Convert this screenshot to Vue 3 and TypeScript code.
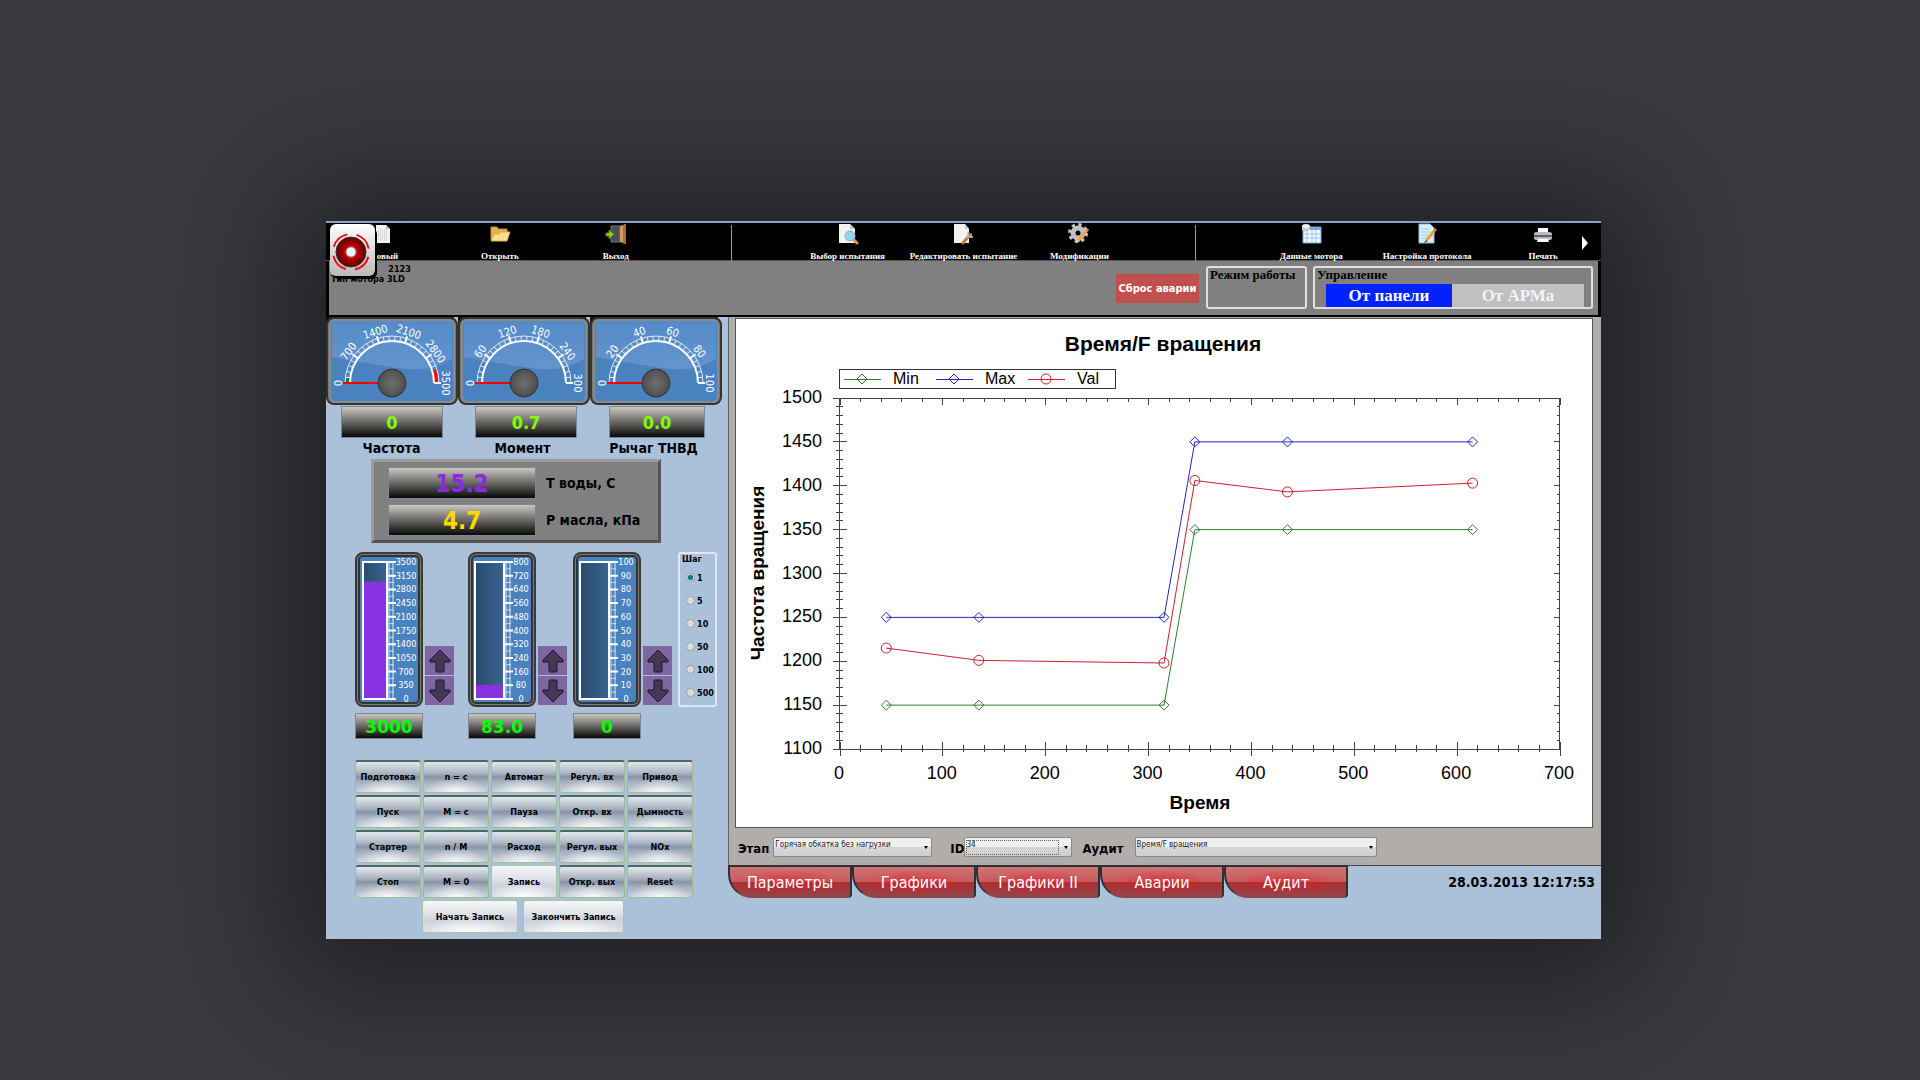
<script setup lang="ts">
import { ref } from 'vue'

interface ToolItem { id: string; label?: string }
interface Dial { caption: string; value: string; step: number; zones: boolean; wide: number }
interface Channel { max: number; divisions: number; value: number; text: string; barX: number; barW: number; labelX: number; name: string }
interface Point { x: number; y: number }
interface Series { name: string; color: string; round: boolean; points: Point[]; legendX: number }

const tools: ToolItem[] = [
  { id: 'new', label: 'Новый' },
  { id: 'open', label: 'Открыть' },
  { id: 'exit', label: 'Выход' },
  { id: 'sep1' },
  { id: 'find', label: 'Выбор испытания' },
  { id: 'edit', label: 'Редактировать испытание' },
  { id: 'mods', label: 'Модификации' },
  { id: 'sep2' },
  { id: 'data', label: 'Данные мотора' },
  { id: 'protocol', label: 'Настройка протокола' },
  { id: 'print', label: 'Печать' },
]

const dials: Dial[] = [
  { caption: 'Частота', value: '0', step: 700, zones: true, wide: 102 },
  { caption: 'Момент', value: '0.7', step: 60, zones: false, wide: 102 },
  { caption: 'Рычаг ТНВД', value: '0.0', step: 20, zones: false, wide: 96 },
]

const C = 66
function polar(r: number, deg: number): Point {
  const a = (deg * Math.PI) / 180
  return { x: C - r * Math.cos(a), y: C - r * Math.sin(a) }
}
function arc(r: number, from: number, to: number): string {
  const a = polar(r, from)
  const b = polar(r, to)
  return `M${a.x} ${a.y}A${r} ${r} 0 0 1 ${b.x} ${b.y}`
}
function radial(r1: number, r2: number, deg: number): string {
  const a = polar(r1, deg)
  const b = polar(r2, deg)
  return `M${a.x} ${a.y}L${b.x} ${b.y}`
}
const majors = [0, 1, 2, 3, 4, 5].map((i) => i * 36)
const majorPath = majors.map((d) => radial(42, 49, d)).join('')
const minorPath = Array.from({ length: 26 }, (_, i) => radial(42, 47, i * 7.2)).join('')

const channels: Channel[] = [
  { name: 'Частота', max: 3500, divisions: 10, value: 3000, text: '3000', barX: 8, barW: 24, labelX: 51 },
  { name: 'Момент', max: 800, divisions: 10, value: 83, text: '83.0', barX: 7, barW: 29, labelX: 53 },
  { name: 'Рычаг ТНВД', max: 100, divisions: 10, value: 0, text: '0', barX: 7, barW: 29, labelX: 53 },
]
const meterY = (part: number) => 147 - part * 137
function meterMinor(c: Channel): string {
  const x = c.barX + c.barW + 2
  return Array.from({ length: 20 }, (_, i) => `M${x} ${meterY(i / 20)}h5`).join('')
}
function meterMajor(c: Channel): string {
  const x = c.barX + c.barW
  return Array.from({ length: 11 }, (_, i) => `M${x} ${meterY(i / 10)}h9`).join('')
}

const steps = [1, 5, 10, 50, 100, 500]
const step = ref(1)

const commands = [
  'Подготовка', 'n = c', 'Автомат', 'Регул. вх', 'Привод',
  'Пуск', 'M = c', 'Пауза', 'Откр. вх', 'Дымность',
  'Стартер', 'n / M', 'Расход', 'Регул. вых', 'NOx',
  'Стоп', 'M = 0', 'Запись', 'Откр. вых', 'Reset',
]
const tabs = ['Параметры', 'Графики', 'Графики II', 'Аварии', 'Аудит']

const px = (v: number) => 104 + (v * 720) / 700
const py = (v: number) => 430 - ((v - 1100) * 351) / 400
const times = [45, 135, 315, 345, 435, 615]
const line = (ys: number[]): Point[] => ys.map((y, i) => ({ x: px(times[i]), y: py(y) }))
const series: Series[] = [
  { name: 'Min', color: '#2e7d32', round: false, legendX: 126, points: line([1150, 1150, 1150, 1350, 1350, 1350]) },
  { name: 'Max', color: '#2626c4', round: false, legendX: 218, points: line([1250, 1250, 1250, 1450, 1450, 1450]) },
  { name: 'Val', color: '#cc1f2f', round: true, legendX: 310, points: line([1215, 1201, 1198, 1406, 1393, 1403]) },
]
const poly = (p: Point[]) => p.map((q) => `${q.x},${q.y}`).join(' ')
const diamond = (x: number, y: number) => `M${x - 5} ${y}L${x} ${y - 5}L${x + 5} ${y}L${x} ${y + 5}Z`
const yTicks = Array.from({ length: 9 }, (_, i) => 1100 + i * 50)
const xTicks = Array.from({ length: 8 }, (_, i) => i * 100)
const snap = (v: number) => Math.round(v) + 0.5
const tickPath = [
  ...Array.from({ length: 41 }, (_, i) => {
    const y = snap(py(1100 + i * 10) - 0.5)
    const big = i % 5 === 0
    return `M${big ? 97 : 100} ${y}h${big ? 14 : 7}M824 ${y}h${big ? -6 : -3}`
  }),
  ...Array.from({ length: 36 }, (_, i) => {
    const x = snap(px(i * 20) - 0.5)
    const big = i % 5 === 0
    return `M${x} ${big ? 423 : 426}v${big ? 14 : 7}M${x} 79v${big ? 7 : 4}`
  }),
].join('')
</script>

<template>
  <div class="desktop">
    <main class="window">
      <nav class="toolbar">
        <template v-for="t in tools" :key="t.id">
          <span v-if="!t.label" class="separator"></span>
          <button v-else type="button" class="tool">
            <svg width="22" height="22" viewBox="0 0 22 22" aria-hidden="true">
              <template v-if="t.id === 'new'">
                <path d="M3 2h10l4 4v14H3z" fill="#f4f4f4" />
                <path d="M5 7h9M5 9h9M5 11h9M5 13h9M5 15h9M5 17h9" stroke="#bbb" stroke-dasharray="1 1" />
                <path d="M13 2v4h4z" fill="#bbb" />
              </template>
              <template v-else-if="t.id === 'open'">
                <path d="M2 17V4h6l1 2h9v3" fill="#e2b552" stroke="#c4923a" />
                <path d="M2 18L5 11h5l1-2h10l-3 9z" fill="#fbdf8e" stroke="#d9a94a" />
              </template>
              <template v-else-if="t.id === 'exit'">
                <path d="M6 3h9v16H6z" fill="#4b4f52" stroke="#777" />
                <path d="M15 3l6-2v20l-6-2z" fill="#d39a5c" />
                <path d="M18 2l3-1v20l-3-1z" fill="#a86f36" />
                <path d="M1 10h3V7l5 4-5 5v-3H1z" fill="#8fd01c" stroke="#4d8a0a" />
              </template>
              <template v-else-if="t.id === 'find'">
                <path d="M2 1h11l5 5v14H2z" fill="#f2f2f0" />
                <path d="M13 1v5h5z" fill="#c8c8c8" />
                <path d="M16 16l4 4" stroke="#e79a2c" stroke-width="3" stroke-linecap="round" />
                <circle cx="13" cy="13" r="5" fill="#8fd4ee" stroke="#9aa" />
              </template>
              <template v-else-if="t.id === 'edit'">
                <path d="M2 1h11l4 5v14H2z" fill="#f2f2f0" />
                <path d="M13 1v5h4z" fill="#c8c8c8" />
                <path d="M16 14l-5 6" stroke="#c9773a" stroke-width="3" stroke-linecap="round" />
                <path d="M15 15l3-3M17 9q-2 3 1 5l3 0M20 12l-2-1" stroke="#a9a9a9" stroke-width="2" fill="none" />
              </template>
              <template v-else-if="t.id === 'mods'">
                <circle cx="10" cy="10" r="8" fill="none" stroke="#c2c2c2" stroke-width="4" stroke-dasharray="3 3.3" />
                <circle cx="10" cy="10" r="5" fill="none" stroke="#c2c2c2" stroke-width="5" />
                <path d="M19 7L10 18" stroke="#f0a63a" stroke-width="3" />
                <path d="M20 6l-1 1" stroke="#d98a9a" stroke-width="3" />
                <path d="M10 17l-2 3 3-1z" fill="#f4d9a8" />
              </template>
              <template v-else-if="t.id === 'data'">
                <path d="M3 4h18v16H3z" fill="#f4f8fc" stroke="#6aa6d8" />
                <path d="M3 4h18v3H3z" fill="#6fb0e0" />
                <path d="M7 7v13M12 7v13M16 7v13M3 11h18M3 15h18" stroke="#9cc4e6" />
                <path d="M2 3v4q4 3 8 0V3z" fill="#c9c9c9" />
                <ellipse cx="6" cy="3" rx="4" ry="2" fill="#eee" />
              </template>
              <template v-else-if="t.id === 'protocol'">
                <path d="M3 1h11l4 4v15H3z" fill="#d8eef8" stroke="#8fc1dc" />
                <path d="M5 6h8M5 9h9M5 12h7M5 15h6" stroke="#9fcbe2" />
                <path d="M18 8L10 18" stroke="#eda23c" stroke-width="3" />
                <path d="M20 6l-2 2" stroke="#cc7f7f" stroke-width="3" />
                <path d="M10 17l-2 3 3-1z" fill="#444" />
              </template>
              <template v-else>
                <path d="M6 5h10v6H6z" fill="#fff" />
                <path d="M2 11q0-2 3-2h12q3 0 3 2v4q0 2-3 2H5q-3 0-3-2z" fill="#b9bcc0" />
                <path d="M2 12h18v2H2z" fill="#5d6064" />
                <path d="M6 16h10l1 3H5z" fill="#fff" />
              </template>
            </svg>
            <span>{{ t.label }}</span>
          </button>
        </template>
        <button type="button" class="more" aria-label="Далее">
          <svg width="8" height="14" viewBox="0 0 8 14"><path d="M1 0l6 7-6 7z" fill="#fff" /></svg>
        </button>
      </nav>

      <header class="status">
        <div class="motor">
          <p>№ мотора<span>2123</span></p>
          <p>Тип мотора 3LD</p>
        </div>
        <button type="button" class="reset">Сброс аварии</button>
        <fieldset class="box mode"><legend>Режим работы</legend></fieldset>
        <fieldset class="box control">
          <legend>Управление</legend>
          <div class="switch">
            <button type="button" class="active">От панели</button>
            <button type="button">От АРМа</button>
          </div>
        </fieldset>
        <svg class="siren" width="50" height="58" viewBox="0 0 50 58" aria-hidden="true">
          <defs>
            <linearGradient id="plate" x1="0" y1="0" x2="0" y2="1">
              <stop offset="0" stop-color="#fff" /><stop offset="1" stop-color="#b9b9b9" />
            </linearGradient>
            <radialGradient id="lamp"><stop offset="0.3" stop-color="#d40000" /><stop offset="1" stop-color="#5a0000" /></radialGradient>
          </defs>
          <rect x="3" y="4" width="44" height="51" rx="6" />
          <rect x="0" y="0" width="45" height="52" rx="6" fill="url(#plate)" />
          <circle cx="21" cy="28" r="15" fill="url(#lamp)" stroke="#333" />
          <circle cx="21" cy="28" r="5" fill="#f2f2f2" stroke="#999" />
          <circle cx="21" cy="28" r="18" fill="none" stroke="#f01010" stroke-width="2" stroke-dasharray="19 9.3" stroke-dashoffset="-5" />
        </svg>
      </header>

      <div class="body">
        <section class="left">
          <div class="dials">
            <svg v-for="d in dials" :key="d.caption" width="132" height="88" viewBox="0 0 132 88" role="img" :aria-label="d.caption">
              <defs>
                <linearGradient id="face" x1="0" y1="0" x2="0" y2="1">
                  <stop offset="0" stop-color="#5c91cd" /><stop offset="1" stop-color="#76a0d4" />
                </linearGradient>
                <radialGradient id="knob"><stop offset="0" stop-color="#707070" /><stop offset="1" stop-color="#4c4c4c" /></radialGradient>
              </defs>
              <path d="M0 0h128v12H0z" fill="#111" />
              <rect x="1" y="1" width="130" height="86" rx="7" fill="#777" stroke="#333" stroke-width="2" />
              <rect x="4" y="3" width="124" height="82" rx="5" fill="#4a82c0" stroke="#8a8a8a" stroke-width="2" />
              <path d="M6 4h120v38q-22 14-54 9T6 40z" fill="url(#face)" opacity="0.6" />
              <path :d="arc(47, 0, 180)" fill="none" stroke="#dbe8f6" />
              <path :d="minorPath" stroke="#dbe8f6" />
              <path v-if="d.zones" :d="arc(44, 163, 180)" fill="none" stroke="#f00" stroke-width="4" />
              <path v-if="d.zones" :d="arc(44, 0, 6)" fill="none" stroke="#187a30" stroke-width="4" />
              <path :d="arc(42, 0, 180)" fill="none" stroke="#fff" stroke-width="2" />
              <path :d="majorPath" stroke="#fff" stroke-width="2" />
              <text
                v-for="(m, i) in majors" :key="m" class="dial-text"
                :transform="`translate(${polar(54, m).x} ${polar(54, m).y}) rotate(${m - 90})`"
                y="4"
              >{{ i * d.step }}</text>
              <path d="M17 66h36" stroke="#f00" stroke-width="2" />
              <circle cx="66" cy="66" r="14" fill="url(#knob)" stroke="#333" />
            </svg>
          </div>
          <div class="dial-values">
            <output v-for="d in dials" :key="d.caption" class="readout lime" :style="{ width: d.wide + 'px' }">{{ d.value }}</output>
          </div>
          <div class="dial-names"><span v-for="d in dials" :key="d.caption">{{ d.caption }}</span></div>

          <div class="params">
            <output class="readout water">15.2</output><span>Т воды, С</span>
            <output class="readout oil">4.7</output><span>Р масла, кПа</span>
          </div>

          <div class="channels">
            <div v-for="c in channels" :key="c.name" class="channel">
              <div class="meter">
                <svg width="68" height="155" viewBox="0 0 68 155" role="img" :aria-label="c.name">
                  <defs>
                    <linearGradient id="tank"><stop offset="0" stop-color="#2b4a6a" /><stop offset="1" stop-color="#386492" /></linearGradient>
                  </defs>
                  <rect x="1" y="1" width="66" height="153" rx="7" fill="#7c7c7c" stroke="#3a3a3a" stroke-width="2" />
                  <rect x="4" y="4" width="60" height="147" rx="4" fill="#4a82c0" stroke="#333" stroke-width="2" />
                  <rect :x="c.barX" y="9" :width="c.barW" height="138" fill="url(#tank)" />
                  <rect :x="c.barX" :y="meterY(c.value / c.max)" :width="c.barW" :height="(137 * c.value) / c.max" fill="#8833e2" />
                  <rect :x="c.barX" y="10" :width="c.barW" height="137" fill="none" stroke="#fff" stroke-width="2" />
                  <path :d="meterMinor(c)" stroke="#c9dcf2" />
                  <path :d="`M${c.barX + c.barW + 2} 10v137M${c.barX + c.barW + 6} 10v137`" stroke="#dbe8f6" />
                  <path :d="meterMajor(c)" stroke="#fff" stroke-width="2" />
                  <text v-for="n in c.divisions + 1" :key="n" class="meter-text" :x="c.labelX" :y="meterY((n - 1) / c.divisions) + 3">{{ ((n - 1) * c.max) / c.divisions }}</text>
                </svg>
                <output class="readout green">{{ c.text }}</output>
              </div>
              <div class="arrows">
                <button type="button" aria-label="Больше"><svg width="22" height="24" viewBox="0 0 22 24"><path d="M11 1L21 11V13H15V22Q15 23 14 23H8Q7 23 7 22V13H1V11Z" /></svg></button>
                <button type="button" aria-label="Меньше"><svg width="22" height="24" viewBox="0 0 22 24"><path d="M11 23L21 13V11H15V2Q15 1 14 1H8Q7 1 7 2V11H1V13Z" /></svg></button>
              </div>
            </div>
            <fieldset class="steps">
              <legend>Шаг</legend>
              <label v-for="s in steps" :key="s"><input v-model="step" type="radio" name="step" :value="s" />{{ s }}</label>
            </fieldset>
          </div>

          <div class="commands">
            <button v-for="c in commands" :key="c" type="button" :class="{ light: c === 'Запись' }">{{ c }}</button>
          </div>
          <div class="record">
            <button type="button" class="light start">Начать Запись</button>
            <button type="button" class="light stop">Закончить Запись</button>
          </div>
        </section>

        <section class="right">
          <div class="page">
            <div class="chart">
              <svg viewBox="0 0 856 508" role="img" aria-label="Время/F вращения">
                <text class="title" x="427" y="32">Время/F вращения</text>
                <rect x="103.5" y="50.5" width="276" height="19" fill="none" stroke="#333" />
                <g v-for="s in series" :key="s.name" :stroke="s.color" fill="none">
                  <path :d="`M${s.legendX - 18} 60.5h37`" />
                  <circle v-if="s.round" :cx="s.legendX" cy="60" r="5" />
                  <path v-else :d="diamond(s.legendX, 60)" />
                  <text class="legend" :x="s.legendX + 31" y="65">{{ s.name }}</text>
                </g>
                <path d="M103.5 79V430M103 79.5H824M103 430.5H824M823.5 79V430" stroke="#444" />
                <path :d="tickPath" stroke="#444" />
                <text v-for="v in yTicks" :key="v" class="tick end" x="86" :y="py(v) + 5">{{ v }}</text>
                <text v-for="v in xTicks" :key="v" class="tick" :x="px(v) - 1" y="460">{{ v }}</text>
                <g v-for="s in series" :key="s.name" :stroke="s.color" fill="none">
                  <polyline :points="poly(s.points)" />
                  <template v-for="p in s.points" :key="p.x">
                    <circle v-if="s.round" :cx="p.x" :cy="p.y" r="5" />
                    <path v-else :d="diamond(p.x, p.y)" />
                  </template>
                </g>
                <text class="axis" x="464" y="490">Время</text>
                <text class="axis" transform="translate(28 254) rotate(-90)">Частота вращения</text>
              </svg>
            </div>
            <form class="filters" @submit.prevent>
              <label for="stage">Этап</label>
              <span class="pick stage"><select id="stage"><option>Горячая обкатка без нагрузки</option></select></span>
              <label for="ident">ID</label>
              <span class="pick ident"><select id="ident"><option>34</option></select></span>
              <label for="audit">Аудит</label>
              <span class="pick audit"><select id="audit"><option>Время/F вращения</option></select></span>
            </form>
          </div>
          <div class="bottom">
            <button v-for="t in tabs" :key="t" type="button" class="tab">{{ t }}</button>
            <time>28.03.2013 12:17:53</time>
          </div>
        </section>
      </div>
    </main>
  </div>
</template>

<style>
body {
  margin: 0;
  background: #393a3f;
}
</style>

<style scoped>
.desktop {
  box-sizing: border-box;
  min-height: 100vh;
  padding: 221px 319px 141px 326px;
  background: #393a3f;
  overflow: hidden;
  color: #000;
  font-family: "DejaVu Sans Condensed", "DejaVu Sans", sans-serif;
}
.desktop * {
  box-sizing: border-box;
}
button,
select {
  padding: 0;
  border: 0;
  color: inherit;
  font: inherit;
  white-space: nowrap;
}
p {
  margin: 0;
}
.window {
  background: #abc0d9;
  box-shadow: 0 8px 120px 40px rgba(0, 0, 0, 0.45);
}

.toolbar {
  position: relative;
  display: grid;
  grid-template-columns: repeat(11, minmax(0, 1fr));
  height: 40px;
  border-top: 2px solid #8fa3c4;
  border-bottom: 1px solid #555;
  background: #000;
}
.tool {
  display: flex;
  flex-direction: column;
  align-items: center;
  background: none;
  color: #fff;
  font: bold 9px/10px "Liberation Serif", serif;
}
.tool svg {
  margin-bottom: 6px;
}
.separator {
  justify-self: center;
  width: 1px;
  margin-top: 2px;
  background: #999;
}
.more {
  position: absolute;
  top: 13px;
  right: 12px;
  height: 14px;
  background: none;
  line-height: 0;
}

.status {
  position: relative;
  display: flex;
  height: 56px;
  padding: 3px 5px 0 2px;
  border: solid #000;
  border-width: 0 3px 2px 3px;
  background: #808080;
}
.motor {
  flex: 1;
  font-size: 9px;
  font-weight: bold;
  line-height: 10px;
}
.motor span {
  margin-left: 11px;
}
.siren {
  position: absolute;
  top: -37px;
  left: 1px;
}
.reset {
  width: 83px;
  height: 29px;
  margin: 10px 7px 0 0;
  background: #c0504d;
  color: #fff;
  font-size: 11px;
  font-weight: bold;
}
.box {
  min-width: 0;
  height: 43px;
  margin: 2px 0 0;
  padding: 0;
  border: 2px solid #e0e0e0;
  border-radius: 3px;
  font-family: "Liberation Serif", serif;
  font-weight: bold;
}
.box legend {
  float: left;
  width: 100%;
  height: 16px;
  padding: 0 0 0 2px;
  font-size: 13px;
  line-height: 13px;
}
.mode {
  width: 101px;
  margin-right: 6px;
}
.control {
  width: 280px;
}
.switch {
  display: flex;
  clear: both;
  height: 23px;
  margin: 0 7px 0 11px;
}
.switch button {
  flex: 1;
  background: #c0c0c0;
  color: #f0f4f8;
  font-size: 17px;
  font-weight: bold;
}
.switch .active {
  flex: none;
  width: 126px;
  background: #0022ff;
  color: #fff;
}

.body {
  display: flex;
}
.left {
  flex: none;
  width: 402px;
  padding-bottom: 6px;
}
.dials {
  display: flex;
  height: 88px;
}
.dial-text,
.meter-text {
  fill: #fff;
  text-anchor: middle;
}
.dial-text {
  font-size: 11px;
}
.meter-text {
  font-size: 9px;
}
.dial-values {
  display: flex;
  gap: 32px;
  padding: 1px 0 0 15px;
}
.readout {
  display: block;
  height: 32px;
  border: 1px solid #7c8894;
  background: linear-gradient(#cbc7bf, #6a6865 50%, #080808);
  font-weight: bold;
  line-height: 32px;
  text-align: center;
}
.lime {
  color: #7fff00;
  font-size: 18px;
}
.dial-names {
  display: flex;
  height: 21px;
  font-size: 14px;
  font-weight: bold;
  line-height: 21px;
}
.dial-names span {
  width: 131px;
  text-align: center;
}
.params {
  display: grid;
  grid-template-columns: 148px 1fr;
  align-content: center;
  align-items: center;
  gap: 5px 10px;
  width: 290px;
  height: 84px;
  margin-left: 45px;
  padding: 2px 0 2px 14px;
  border: 3px solid;
  border-color: #9c9c9c #555 #555 #9c9c9c;
  background: #808080;
  font-size: 14px;
  font-weight: bold;
}
.params .readout {
  font-size: 24px;
}
.water {
  color: #8a2be2;
}
.oil {
  color: #ffd700;
}
.channels {
  display: flex;
  gap: 6px;
  padding: 9px 0 0 29px;
}
.channel {
  display: flex;
  gap: 2px;
}
.channel:first-child {
  margin-right: 8px;
}
.meter svg {
  display: block;
}
.green {
  height: 26px;
  margin-top: 6px;
  color: #0f0;
  font-family: "DejaVu Sans", sans-serif;
  font-size: 17px;
  line-height: 27px;
}
.arrows {
  display: flex;
  flex-direction: column;
  gap: 1px;
  margin-top: 94px;
}
.arrows button {
  display: grid;
  place-items: center;
  width: 29px;
  height: 29px;
  background: #8066a0;
}
.arrows path {
  fill: #453857;
  stroke: #1c1626;
  stroke-width: 1;
}
.steps {
  width: 39px;
  min-width: 0;
  height: 155px;
  margin: 0;
  padding: 0;
  border: 2px solid #dfe8f2;
  border-radius: 3px;
  font-size: 9px;
  font-weight: bold;
}
.steps legend {
  float: left;
  width: 100%;
  height: 12px;
  padding: 0 0 0 2px;
  line-height: 10px;
}
.steps label {
  display: flex;
  clear: both;
  align-items: center;
  gap: 2px;
  height: 23px;
  padding-left: 6px;
}
.steps input {
  flex: none;
  width: 9px;
  height: 9px;
  margin: 0;
  appearance: none;
  border: 1px solid #9a9ea2;
  border-radius: 50%;
  background: #dcdcdc;
}
.steps input:checked {
  background: radial-gradient(circle, #0a7c98 45%, #dcdcdc 60%);
}
.commands {
  display: grid;
  grid-template-columns: repeat(5, 66px);
  gap: 2px;
  margin: 21px 0 0 29px;
}
.commands button,
.record button {
  height: 33px;
  border: 1px solid #9dbf8d;
  border-top: 2px solid #4d6a5c;
  border-radius: 3px;
  background: radial-gradient(50% 45% at 50% 100%, rgba(255, 255, 255, 0.9), rgba(255, 255, 255, 0)), linear-gradient(#e4e8ed 0%, #a9b3c0 38%, #8794a6 50%, #a4afbe 65%, #c8d0da 100%);
  font-size: 9px;
  font-weight: bold;
}
.commands .light,
.record button {
  border: 1px solid #a9c59a;
  background: radial-gradient(50% 45% at 50% 100%, #fff, rgba(255, 255, 255, 0)), linear-gradient(#f6f7f9 0%, #dcdfe5 45%, #ced2da 60%, #dde1e7 100%);
}
.record {
  display: flex;
  gap: 5px;
  margin: 2px 0 0 96px;
}
.start {
  width: 96px;
}
.stop {
  width: 101px;
}

.right {
  flex: 1;
  min-width: 0;
}
.page {
  padding: 1px 8px 0 6px;
  border-bottom: 1px solid #444;
  border-left: 1px solid #5c6670;
  background: #b0adab;
}
.chart {
  border: 1px solid #555;
  background: #fff;
}
.chart svg {
  display: block;
  width: 100%;
}
.chart text {
  fill: #000;
  stroke: none;
  font-family: "Liberation Sans", Arial, sans-serif;
  text-anchor: middle;
}
.chart .title {
  font-size: 21px;
  font-weight: bold;
}
.chart .axis {
  font-size: 19px;
  font-weight: bold;
}
.chart .tick {
  font-size: 18px;
}
.chart .legend {
  font-size: 16px;
  text-anchor: start;
}
.chart .end {
  text-anchor: end;
}
.filters {
  display: flex;
  align-items: center;
  height: 37px;
  padding-left: 3px;
  font-size: 13px;
  font-weight: bold;
}
.filters label {
  padding-top: 3px;
}
.pick {
  position: relative;
  height: 20px;
}
.pick::after {
  position: absolute;
  top: 9px;
  right: 4px;
  border: 2px solid transparent;
  border-top: 3px solid #000;
  content: "";
}
.pick select {
  display: block;
  width: 100%;
  height: 20px;
  padding: 0 14px 4px 1px;
  appearance: none;
  border: 1px solid #8a8a8a;
  border-radius: 2px;
  background: linear-gradient(#f0f0f0 50%, #d8d8d8 50%, #cfcfcf);
  color: #222;
  font-size: 8px;
  font-weight: normal;
}
.stage {
  width: 159px;
  margin: 0 18px 0 4px;
}
.ident {
  width: 108px;
  margin-right: 10px;
}
.ident::before {
  position: absolute;
  top: 3px;
  right: 13px;
  bottom: 2px;
  left: 2px;
  border: 1px dotted #666;
  content: "";
  pointer-events: none;
}
.audit {
  width: 242px;
  margin-left: 11px;
}
.bottom {
  display: flex;
  align-items: flex-start;
  padding-right: 6px;
}
.tab {
  width: 124px;
  height: 33px;
  margin-top: -1px;
  border: 2px solid #2f3033;
  border-bottom: 1px solid #7a4a50;
  border-radius: 0 0 4px 24px;
  background: radial-gradient(ellipse at 50% 50%, rgba(225, 30, 40, 0.6), rgba(225, 30, 40, 0) 60%), linear-gradient(#cf7474 0%, #c85a5c 50%, #ad2e30 51%, #94454a 100%);
  color: #fff;
  font-size: 16px;
}
time {
  margin-left: auto;
  font-size: 14px;
  font-weight: bold;
  line-height: 32px;
}
</style>
